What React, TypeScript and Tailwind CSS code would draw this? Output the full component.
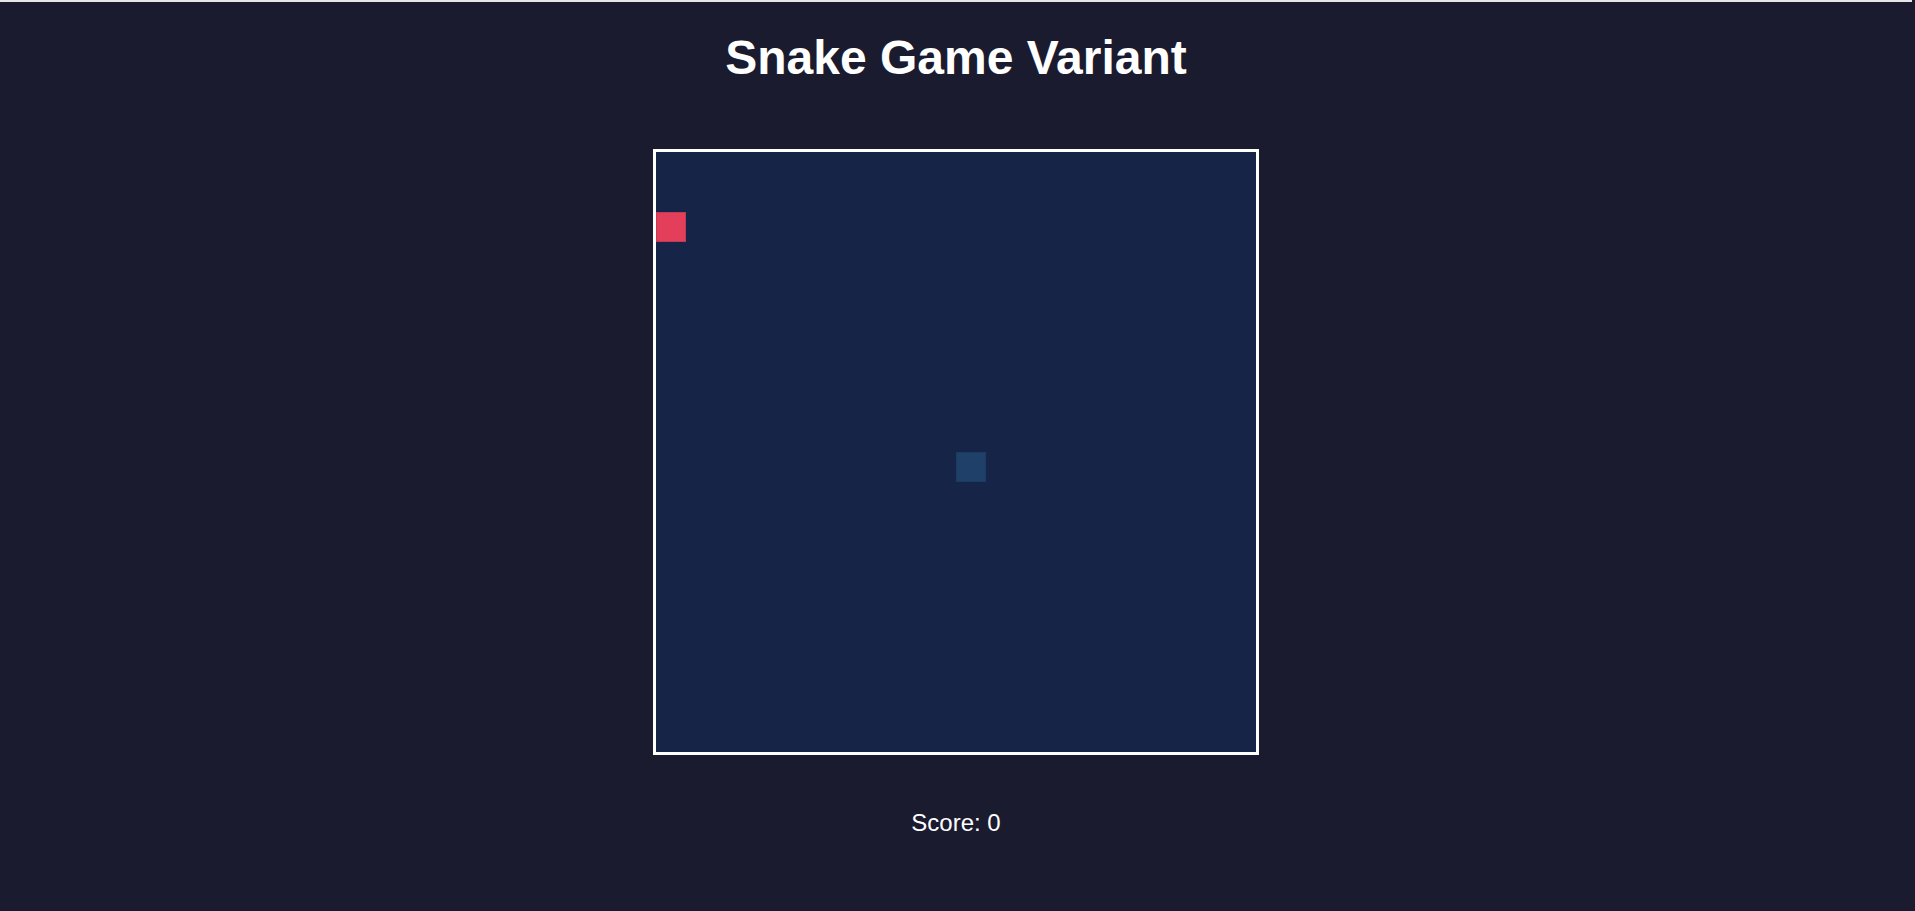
import React from 'react';

const CELL = 30;
const SNAKE = [{ x: 0, y: 2 }];
const FOOD = { x: 10, y: 10 };

export default function App() {
  return (
    <div className="min-h-screen bg-[#1b1b2f] flex flex-col items-center pr-[3px] font-['Liberation_Sans',Arial,sans-serif]">
      <div className="w-full h-[2px] bg-[#e6e6e6]" />
      <h1 className="mt-[32px] text-5xl font-bold text-white">Snake Game Variant</h1>
      <div className="mt-[67px] w-[606px] h-[606px] border-[3px] border-white bg-[#162447]">
        <svg width={600} height={600} viewBox="0 0 600 600" className="block">
          <rect
            x={FOOD.x * CELL + 0.5}
            y={FOOD.y * CELL + 0.5}
            width={CELL - 1}
            height={CELL - 1}
            fill="#1f4068"
            stroke="#1d3a5f"
          />
          {SNAKE.map((s, i) => (
            <rect
              key={i}
              x={s.x * CELL + 0.5}
              y={s.y * CELL + 0.5}
              width={CELL - 1}
              height={CELL - 1}
              fill="#e43f5a"
              stroke="#c23a55"
            />
          ))}
        </svg>
      </div>
      <p className="mt-[52px] text-2xl text-white">Score: 0</p>
    </div>
  );
}
